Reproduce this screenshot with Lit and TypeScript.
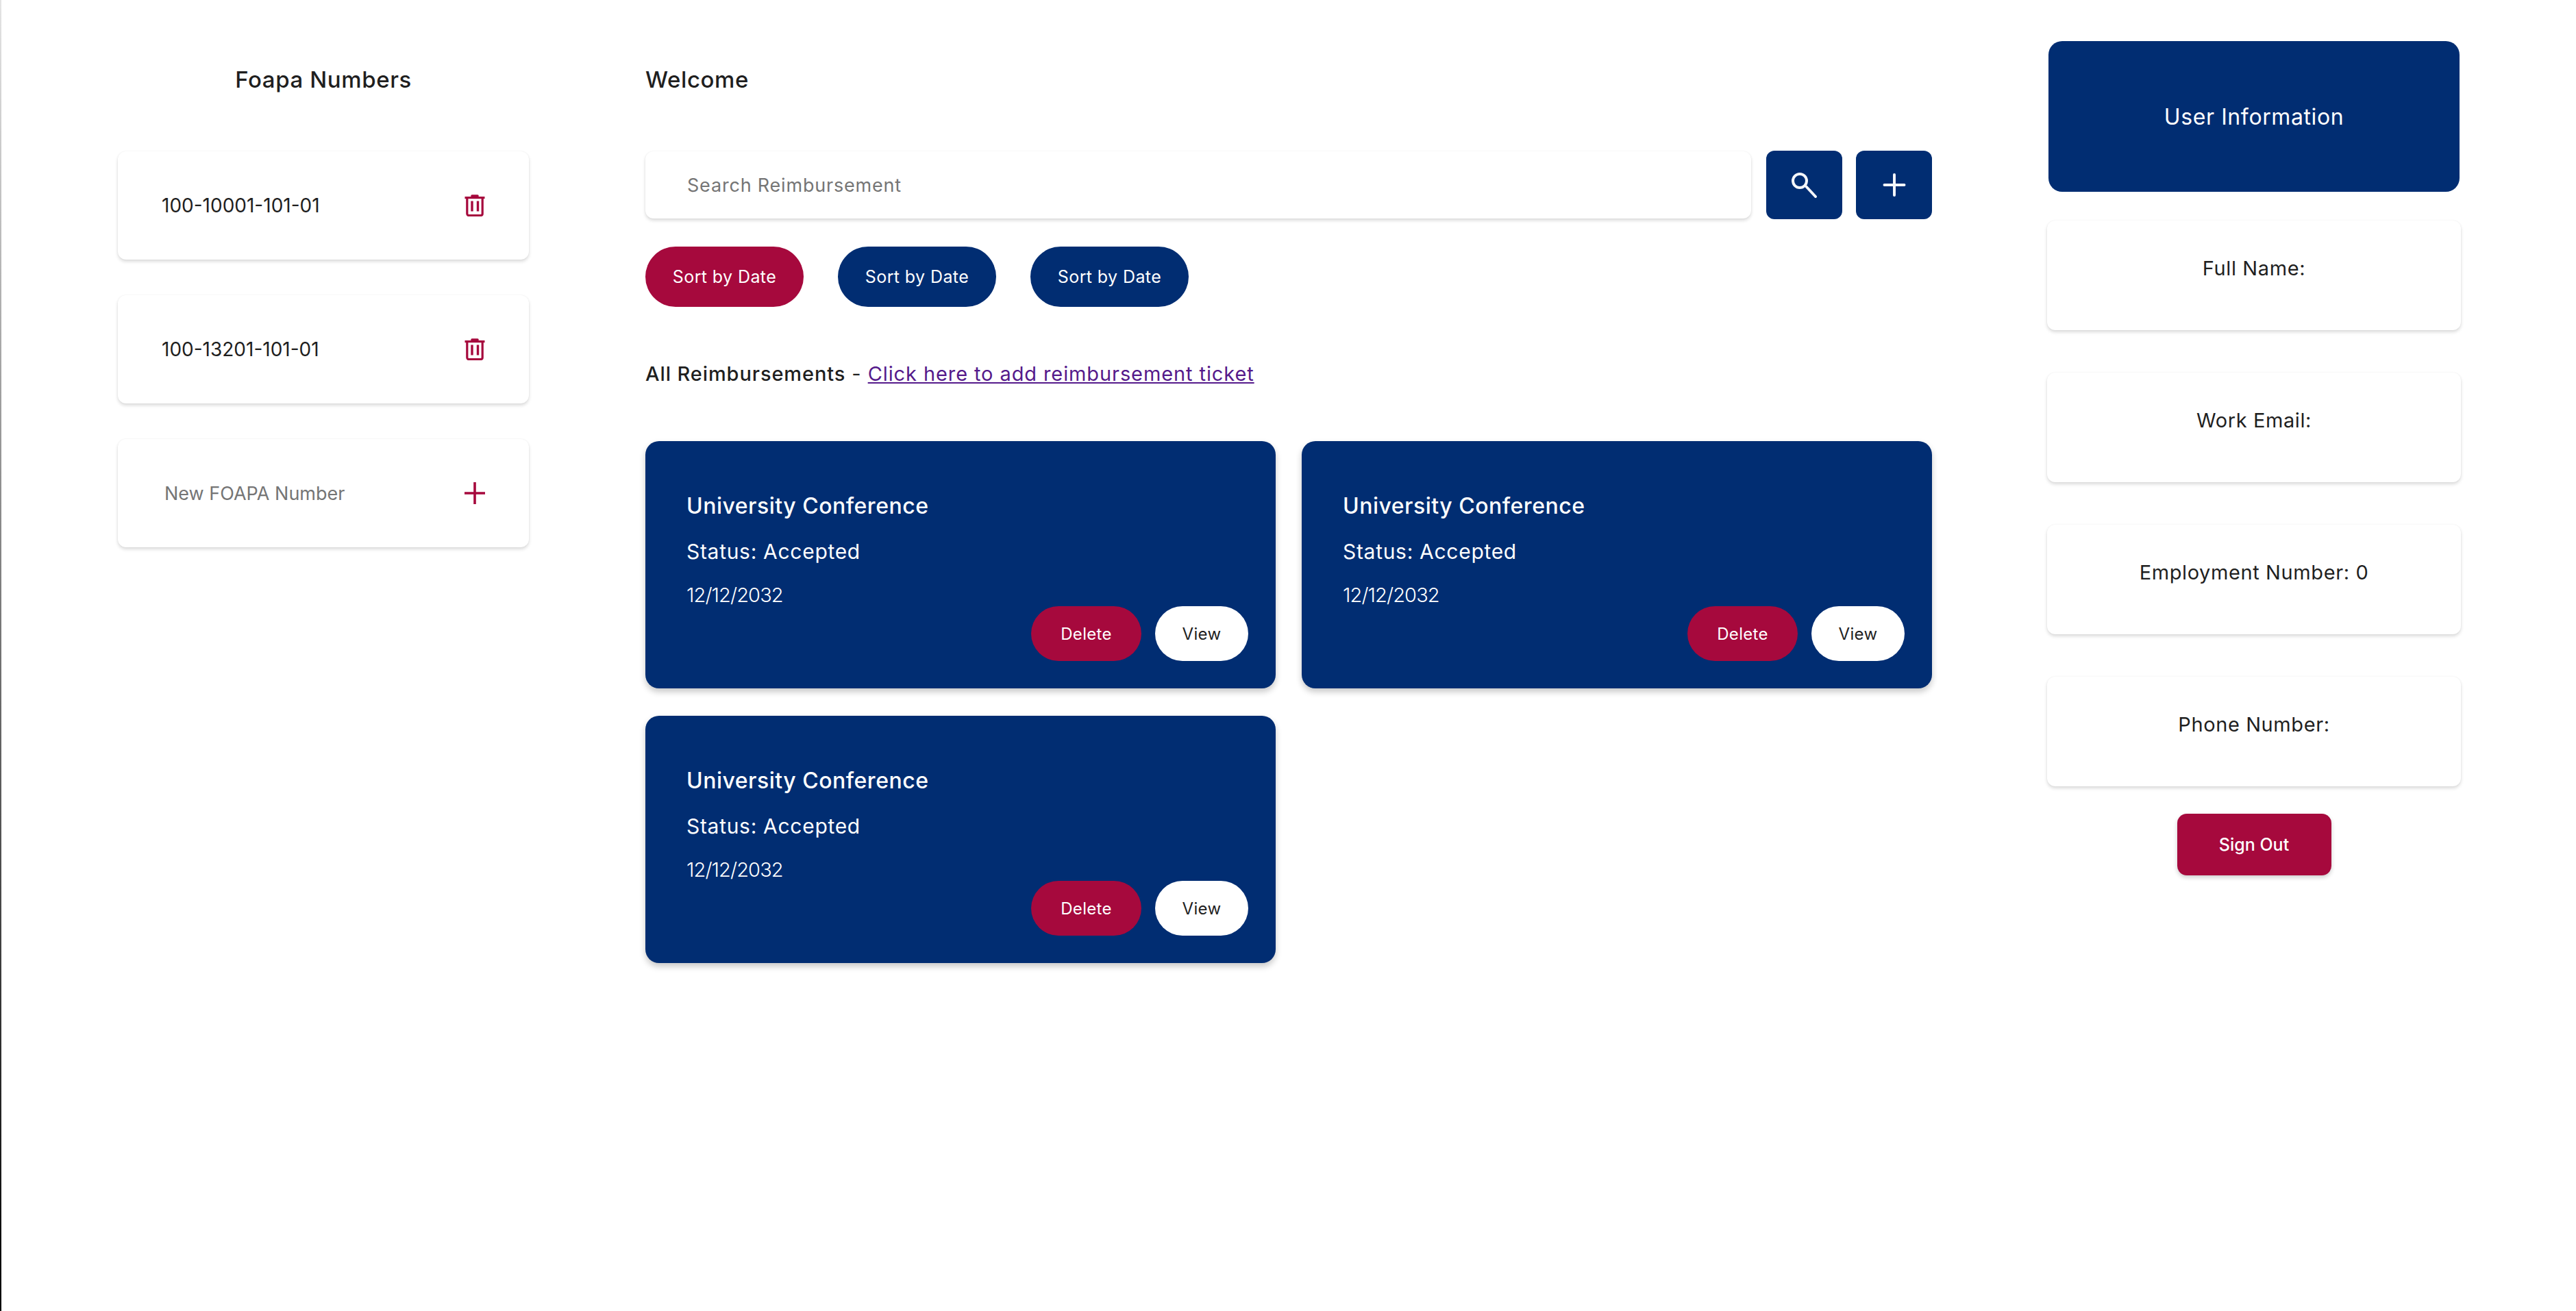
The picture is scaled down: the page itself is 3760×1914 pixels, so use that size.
import { LitElement, html, css, svg } from 'lit';
import { customElement } from 'lit/decorators.js';

const trashIcon = svg`
  <svg class="icon" viewBox="0 0 30 32" fill="none" stroke="#a6093d">
    <path d="M0.5 4.6h29" stroke-width="3.2" />
    <path d="M11 2h8" stroke-width="3.6" stroke-linecap="round" />
    <path d="M3.8 5v23a2.5 2.5 0 0 0 2.5 2.5h17.4a2.5 2.5 0 0 0 2.5-2.5V5" stroke-width="3.2" />
    <path d="M11 9.5v15M19.5 9.5v15" stroke-width="3.4" />
  </svg>
`;

const foapaPlusIcon = svg`
  <svg class="icon" viewBox="0 0 30 32" fill="none" stroke="#a6093d" stroke-width="3.6">
    <path d="M15 0v32M0 16h30" />
  </svg>
`;

const addIcon = svg`
  <svg class="icon-add" viewBox="0 0 34 34" fill="none" stroke="#f4f6fa" stroke-width="4" stroke-linecap="round">
    <path d="M17 2v30M2.5 17h29" />
  </svg>
`;

const searchIcon = svg`
  <svg class="icon-search" viewBox="0 0 37 37" fill="none" stroke="#f4f6fa" stroke-width="4" stroke-linecap="round">
    <circle cx="12" cy="12" r="10" />
    <path d="M21.5 20.5l13.5 14.5" />
  </svg>
`;

const reimbursements = [1, 2, 3];
const userFields = ['Full Name:', 'Work Email:', 'Employment Number: 0', 'Phone Number:'];

@customElement('app-root')
export class AppRoot extends LitElement {
  static styles = css`
    :host {
      display: block;
      min-height: 1914px;
      box-sizing: border-box;
      border-left: 2px solid;
      border-image: linear-gradient(#e4e4e4, #000) 1;
      background: #fff;
      color: #1f1f1f;
      font-family: Inter, 'Liberation Sans', sans-serif;
    }

    * {
      box-sizing: border-box;
    }

    .page {
      display: grid;
      grid-template-columns: 600px 1878px 600px;
      column-gap: 170px;
      padding: 60px 0 0 170px;
    }

    .heading {
      height: 112px;
      margin: 0;
      font-size: 33px;
      font-weight: 500;
      letter-spacing: 0.6px;
      line-height: 112px;
    }

    .foapa-heading {
      text-align: center;
    }

    .foapa-list {
      display: flex;
      flex-direction: column;
      gap: 52px;
      margin-top: 49px;
    }

    .paper {
      border-radius: 12px;
      background: #fff;
      box-shadow:
        0 3px 5px rgba(0, 0, 0, 0.14),
        0 0 3px rgba(0, 0, 0, 0.05);
    }

    .foapa {
      display: flex;
      align-items: center;
      justify-content: space-between;
      height: 158px;
      padding: 0 64px;
      font-size: 28px;
    }

    .placeholder {
      padding-left: 4px;
      color: #757575;
      font-size: 27px;
    }

    .icon {
      display: block;
      width: 30px;
      height: 32px;
    }

    .search-row {
      display: flex;
      gap: 20px;
      margin-top: 48px;
    }

    .search {
      display: flex;
      flex: 1;
      align-items: center;
      height: 98px;
      margin: 1px 2px 0 0;
      padding-left: 61px;
      color: #757575;
      font-size: 27px;
      letter-spacing: 0.8px;
    }

    .square {
      display: flex;
      align-items: center;
      justify-content: center;
      width: 111px;
      height: 100px;
      border: 0;
      border-radius: 12px;
      background: #012d72;
    }

    .icon-search {
      display: block;
      width: 37px;
      height: 37px;
    }

    .icon-add {
      display: block;
      width: 34px;
      height: 34px;
    }

    .filters {
      display: flex;
      gap: 50px;
      margin-top: 40px;
    }

    .pill {
      display: flex;
      align-items: center;
      justify-content: center;
      border: 0;
      border-radius: 999px;
      color: #fff;
      font-family: inherit;
    }

    .sort {
      width: 231px;
      height: 88px;
      background: #012d72;
      font-size: 25px;
      letter-spacing: 0.4px;
    }

    .sort.active {
      background: #a6093d;
    }

    .intro {
      margin: 75px 0 0;
      font-size: 29px;
      letter-spacing: 0.9px;
      line-height: 46px;
    }

    .intro strong {
      font-weight: 500;
    }

    .intro a {
      color: #551a8b;
    }

    .tickets {
      display: grid;
      grid-template-columns: 1fr 1fr;
      gap: 40px 38px;
      margin-top: 75px;
    }

    .ticket {
      display: flex;
      flex-direction: column;
      height: 361px;
      padding: 70px 40px 40px 60px;
      border-radius: 20px;
      background: #012d72;
      box-shadow: 0 5px 10px rgba(0, 0, 0, 0.22);
      color: #fff;
    }

    .ticket h3 {
      margin: 0;
      font-size: 32px;
      font-weight: 500;
      letter-spacing: 0.5px;
      line-height: 50px;
    }

    .ticket p {
      margin: 16px 0 0;
      font-size: 30px;
      letter-spacing: 0.7px;
      line-height: 50px;
    }

    .ticket p.date {
      margin-top: 24px;
      font-size: 29px;
      font-weight: 300;
      letter-spacing: -0.9px;
      line-height: 30px;
    }

    .actions {
      display: flex;
      justify-content: flex-end;
      gap: 20px;
      margin-top: auto;
    }

    .action {
      height: 80px;
      font-size: 24px;
      letter-spacing: 0.3px;
    }

    .delete {
      width: 161px;
      background: #a6093d;
    }

    .view {
      width: 136px;
      background: #fff;
      color: #1f1f1f;
    }

    .user-header {
      display: flex;
      align-items: center;
      justify-content: center;
      height: 220px;
      border-radius: 20px;
      background: #012d72;
      color: #fff;
      font-size: 32px;
      letter-spacing: 0.6px;
    }

    .user-list {
      display: flex;
      flex-direction: column;
      gap: 62px;
      margin-top: 42px;
    }

    .field {
      height: 160px;
      margin: 0 -2px;
      padding-top: 49px;
      font-size: 29px;
      letter-spacing: 0.6px;
      line-height: 42px;
      text-align: center;
    }

    .sign-out {
      display: flex;
      justify-content: center;
      margin-top: 40px;
    }

    .sign-out button {
      width: 225px;
      height: 90px;
      border: 0;
      border-radius: 14px;
      background: #a6093d;
      box-shadow: 0 3px 6px rgba(0, 0, 0, 0.2);
      color: #fff;
      font-family: inherit;
      font-size: 25px;
      font-weight: 500;
    }
  `;

  renderTicket() {
    return html`
      <article class="ticket">
        <h3>University Conference</h3>
        <p>Status: Accepted</p>
        <p class="date">12/12/2032</p>
        <div class="actions">
          <button class="pill action delete">Delete</button>
          <button class="pill action view">View</button>
        </div>
      </article>
    `;
  }

  render() {
    return html`
      <main class="page">
        <section>
          <h2 class="heading foapa-heading">Foapa Numbers</h2>
          <div class="foapa-list">
            <div class="paper foapa"><span>100-10001-101-01</span>${trashIcon}</div>
            <div class="paper foapa"><span>100-13201-101-01</span>${trashIcon}</div>
            <div class="paper foapa">
              <span class="placeholder">New FOAPA Number</span>${foapaPlusIcon}
            </div>
          </div>
        </section>

        <section>
          <h2 class="heading">Welcome</h2>
          <div class="search-row">
            <div class="paper search">Search Reimbursement</div>
            <button class="square">${searchIcon}</button>
            <button class="square">${addIcon}</button>
          </div>
          <div class="filters">
            <button class="pill sort active">Sort by Date</button>
            <button class="pill sort">Sort by Date</button>
            <button class="pill sort">Sort by Date</button>
          </div>
          <p class="intro">
            <strong>All Reimbursements</strong> -
            <a href="#">Click here to add reimbursement ticket</a>
          </p>
          <div class="tickets">${reimbursements.map(() => this.renderTicket())}</div>
        </section>

        <section>
          <div class="user-header">User Information</div>
          <div class="user-list">
            ${userFields.map((field) => html`<div class="paper field">${field}</div>`)}
          </div>
          <div class="sign-out"><button>Sign Out</button></div>
        </section>
      </main>
    `;
  }
}
